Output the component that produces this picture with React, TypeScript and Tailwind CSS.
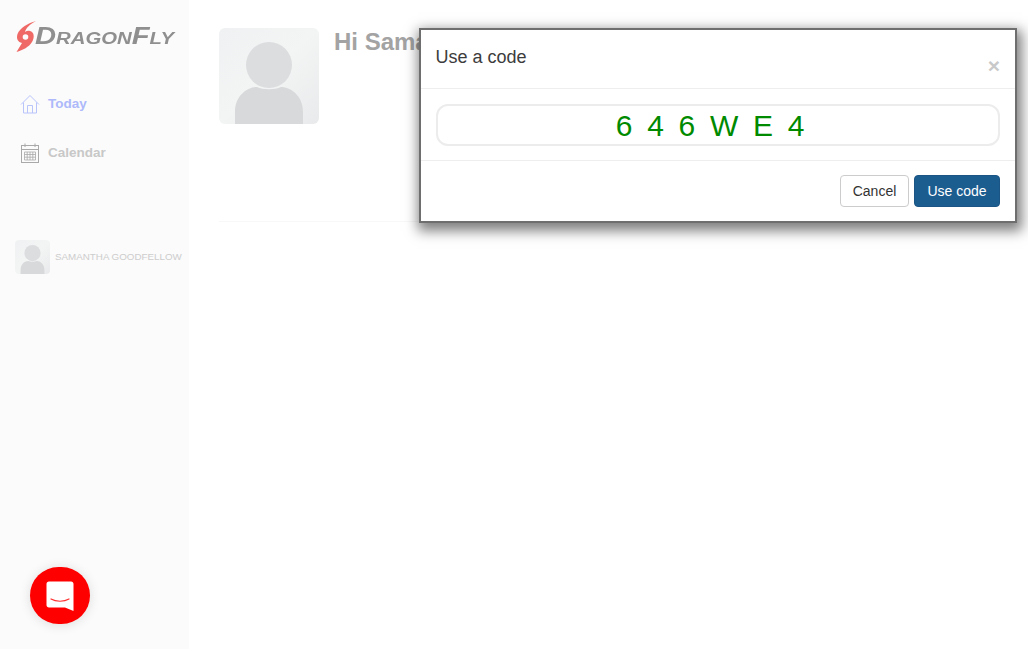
import React from 'react';

const Avatar: React.FC<{ className: string }> = ({ className }) => (
  <div className={`overflow-hidden bg-gradient-to-br from-[#f0f1f2] via-[#f3f4f4] to-[#e9eaeb] ${className}`}>
    <svg viewBox="0 0 100 96" className="w-full h-full" preserveAspectRatio="none">
      <circle cx="50" cy="37" r="23" fill="#dcddde" />
      <path d="M16 96V84C16 68 28 59 38 59C44 62 56 62 62 59C72 59 84 68 84 84V96Z" fill="#d8d9da" />
    </svg>
  </div>
);

const Logo = () => (
  <div className="flex items-center h-[36px] ml-[16px] blur-[0.4px]">
    <svg viewBox="0 0 22 32" className="w-[22px] h-[32px] shrink-0">
      <path
        d="M20 1C12 3 4 8 1.5 14C0 19 2 22 6 23C4 26 2.500 29 0.500 32C7 30 13 27 16 22C19 17 18 12 14 11C12 10.500 10.500 11 9 12C10 8 14 4 20 1Z"
        fill="#ef6a66"
      />
      <circle cx="9.500" cy="17" r="2.800" fill="#fbfbfb" />
    </svg>
    <span className="font-['Liberation_Sans',sans-serif] font-bold italic text-[#8f8f8f] text-[23px] leading-none -ml-[3px] origin-left scale-x-[1.27] [font-variant:small-caps]">
      DragonFly
    </span>
  </div>
);

const HomeIcon = () => (
  <svg viewBox="0 0 20 20" className="w-[20px] h-[20px]" fill="none" stroke="#b9c4fb" strokeWidth="1">
    <path d="M1 10.500L10 1.500L19 10.500" />
    <path d="M3.500 8.500V19H16.500V8.500" />
    <path d="M7.500 19V11.500H12.500V19" />
  </svg>
);

const CalendarIcon = () => (
  <svg viewBox="0 0 20 20" className="w-[20px] h-[20px]" fill="none" stroke="#a9a9a9" strokeWidth="1">
    <rect x="1.500" y="2.500" width="17" height="17" />
    <path d="M1.500 6.500H18.500" />
    <path d="M5 0.500V4M15 0.500V4" />
    <path d="M4.500 9H15.500V17H4.500ZM4.500 11.500H15.500M4.500 14.200H15.500M7.200 9V17M10 9V17M12.800 9V17" strokeWidth="0.8" />
  </svg>
);

export default function App() {
  return (
    <div className="relative w-[1028px] h-[649px] overflow-hidden bg-white font-['Liberation_Sans',Arial,sans-serif]">
      <div className="flex h-full">
        {/* Sidebar */}
        <aside className="w-[189px] shrink-0 bg-[#fbfbfb] pt-[18px]">
          <Logo />
          <nav className="mt-[40px] ml-[20px] flex flex-col gap-[29px]">
            <div className="flex items-center gap-[8px] h-[20px] text-[13.500px] font-bold text-[#adb9fa]">
              <HomeIcon />
              <span className="pt-[1px]">Today</span>
            </div>
            <div className="flex items-center gap-[8px] h-[20px] text-[13.500px] font-bold text-[#c8c8c8]">
              <CalendarIcon />
              <span className="pt-[1px]">Calendar</span>
            </div>
          </nav>
          <div className="mt-[77px] ml-[15px] flex items-center gap-[5px]">
            <Avatar className="w-[35px] h-[34px] rounded-[4px]" />
            <span className="text-[9.800px] text-[#cdcdcd] whitespace-nowrap">SAMANTHA GOODFELLOW</span>
          </div>
        </aside>

        {/* Main */}
        <main className="flex-1 pt-[28px] pl-[30px] pr-[30px]">
          <div className="flex gap-[15px] h-[194px] border-b border-[#f8f8f8]">
            <Avatar className="w-[100px] h-[96px] rounded-[6px]" />
            <h1 className="text-[24px] leading-[28px] font-bold text-[#a3a3a3]">Hi Samantha</h1>
          </div>
        </main>
      </div>

      {/* Chat launcher */}
      <div className="absolute left-[30px] top-[567px] w-[60px] h-[57px] rounded-full bg-[#ff0000] flex items-center justify-center shadow-[0_1px_12px_rgba(0,0,0,0.12)]">
        <svg viewBox="0 0 28 30" className="w-[28px] h-[30px]">
          <path d="M3 0.500H25C26.500 0.500 27.500 1.500 27.500 3V30L19 26.500H3C1.500 26.500 0.500 25.500 0.500 24V3C0.500 1.500 1.500 0.500 3 0.500Z" fill="#fff" />
          <path d="M5 18C10 21 18 21 23 18" fill="none" stroke="#ff3030" strokeWidth="1.200" strokeLinecap="round" />
        </svg>
      </div>

      {/* Use a code modal */}
      <div className="absolute left-[419px] top-[28px] w-[598px] h-[195px] bg-white border-2 border-[#6e6e6e] shadow-[2px_5px_12px_3px_rgba(0,0,0,0.5)] text-[#444]">
        <div className="relative h-[59px] border-b border-[#eeeeee] pl-[14.500px] pt-[16px]">
          <h2 className="text-[18px] leading-[22px] text-[#3c3c3c]">Use a code</h2>
          <span className="absolute right-[15px] top-[24px] text-[21px] leading-[24px] font-bold text-[#c9c9c9]">×</span>
        </div>
        <div className="h-[72px] border-b border-[#eeeeee] pl-[14.500px] pr-[15px] pt-[15px]">
          <div className="h-[42px] rounded-[12px] border-2 border-[#ececec] pr-[12px] text-center text-[30px] leading-[39px] text-[#008a00] tracking-[3.200px]">
            6 4 6 W E 4
          </div>
        </div>
        <div className="flex justify-end gap-[5px] px-[15px] pt-[14px]">
          <button className="h-[32px] w-[69px] rounded-[4px] border border-[#cccccc] bg-white text-[14px] text-[#333]">
            Cancel
          </button>
          <button className="h-[32px] w-[86px] rounded-[4px] border border-[#1b5585] bg-[#1c5d90] text-[14px] text-white">
            Use code
          </button>
        </div>
      </div>
    </div>
  );
}
